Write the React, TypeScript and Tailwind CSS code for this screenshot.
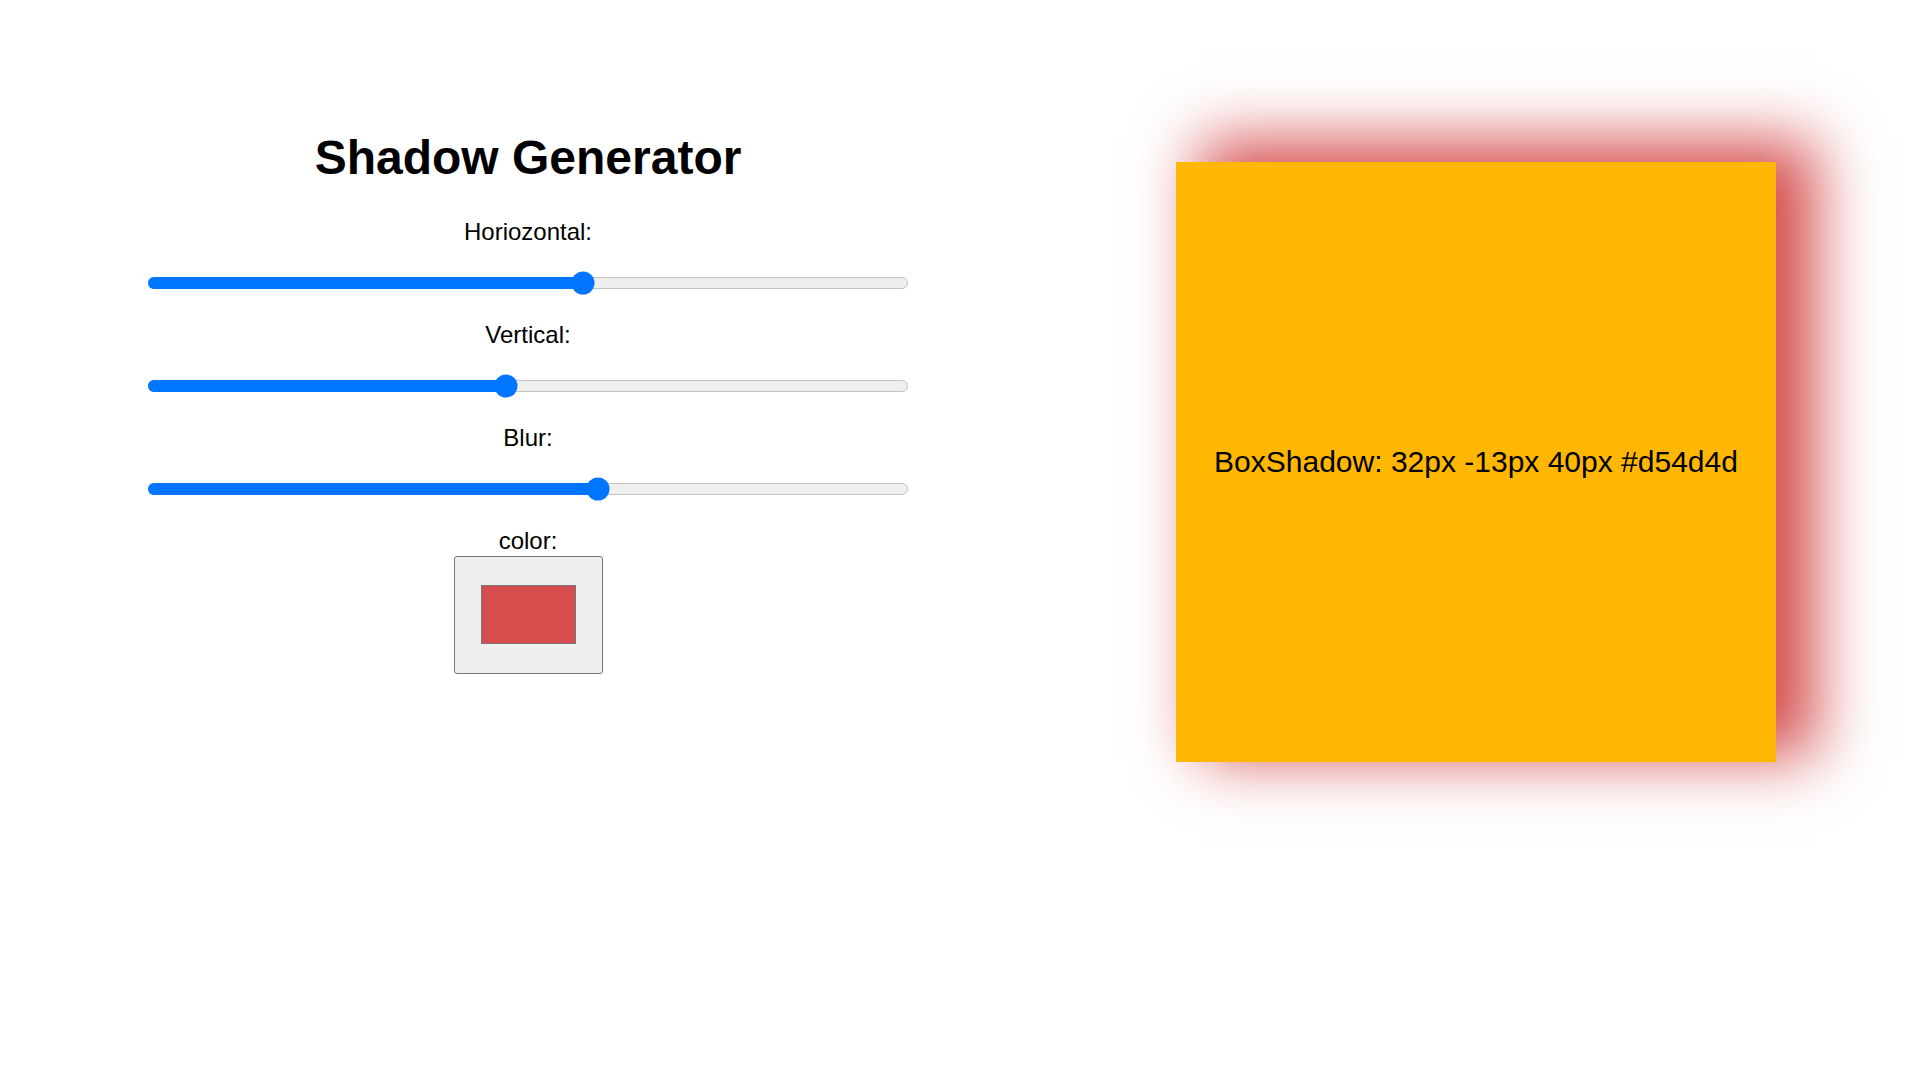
import { useState } from 'react';

interface SliderProps {
  label: string;
  value: number;
  min: number;
  max: number;
}

// track is 760px wide, thumb 23px
const TRACK_W = 760;
const THUMB = 23;

const Slider: React.FC<SliderProps> = ({ label, value, min, max }) => {
  const pct = (value - min) / (max - min);
  const center = THUMB / 2 + pct * (TRACK_W - 31);

  return (
    <div className="flex flex-col items-center mb-[26px]">
      <label className="text-[24px] leading-[28px] text-black">{label}</label>
      <div className="mt-[25px] h-[24px] w-[760px] flex items-center">
        <div className="relative h-[12px] w-full rounded-full border border-[#c2c2c2] bg-[#efefef]">
          <div
            className="absolute -left-px -top-px -bottom-px rounded-full bg-[#0075ff]"
            style={{ width: center + 1 }}
          />
          <div
            className="absolute top-1/2 -translate-y-1/2 -translate-x-1/2 h-[23px] w-[23px] rounded-full bg-[#0075ff]"
            style={{ left: center }}
          />
        </div>
      </div>
    </div>
  );
};

const App: React.FC = () => {
  const [horizontal] = useState(32);
  const [vertical] = useState(-13);
  const [blur] = useState(40);
  const [color] = useState('#d54d4d');

  return (
    <div className="min-h-screen w-full bg-white font-['Liberation_Sans',Arial,sans-serif] text-black">
      <div className="flex items-start pl-[148px] gap-[268px]">
        {/* Controls */}
        <div className="flex flex-col items-center w-[760px] pt-[130px]">
          <h1 className="text-[48px] leading-[56px] font-bold mb-[32px]">Shadow Generator</h1>

          <Slider label="Horiozontal:" value={horizontal} min={-200} max={200} />
          <Slider label="Vertical:" value={vertical} min={-200} max={195} />
          <Slider label="Blur:" value={blur} min={-200} max={200} />

          <div className="flex flex-col items-center">
            <label className="text-[24px] leading-[28px]">color:</label>
            <div className="mt-px w-[149px] h-[118px] rounded-[3px] border border-[#767676] bg-[#efefef] pl-[26px] pt-[28px]">
              <div className="w-[95px] h-[59px] border border-[#777777] bg-[#d54d4d]" />
            </div>
          </div>
        </div>

        {/* Preview */}
        <div className="mt-[162px] w-[600px] h-[600px] bg-[#ffb703] shadow-[32px_-13px_60px_8px_#d54d4d] flex items-center justify-center">
          <p className="text-[30px] leading-[36px]">
            BoxShadow: {horizontal}px {vertical}px {blur}px {color}
          </p>
        </div>
      </div>
    </div>
  );
};

export default App;
